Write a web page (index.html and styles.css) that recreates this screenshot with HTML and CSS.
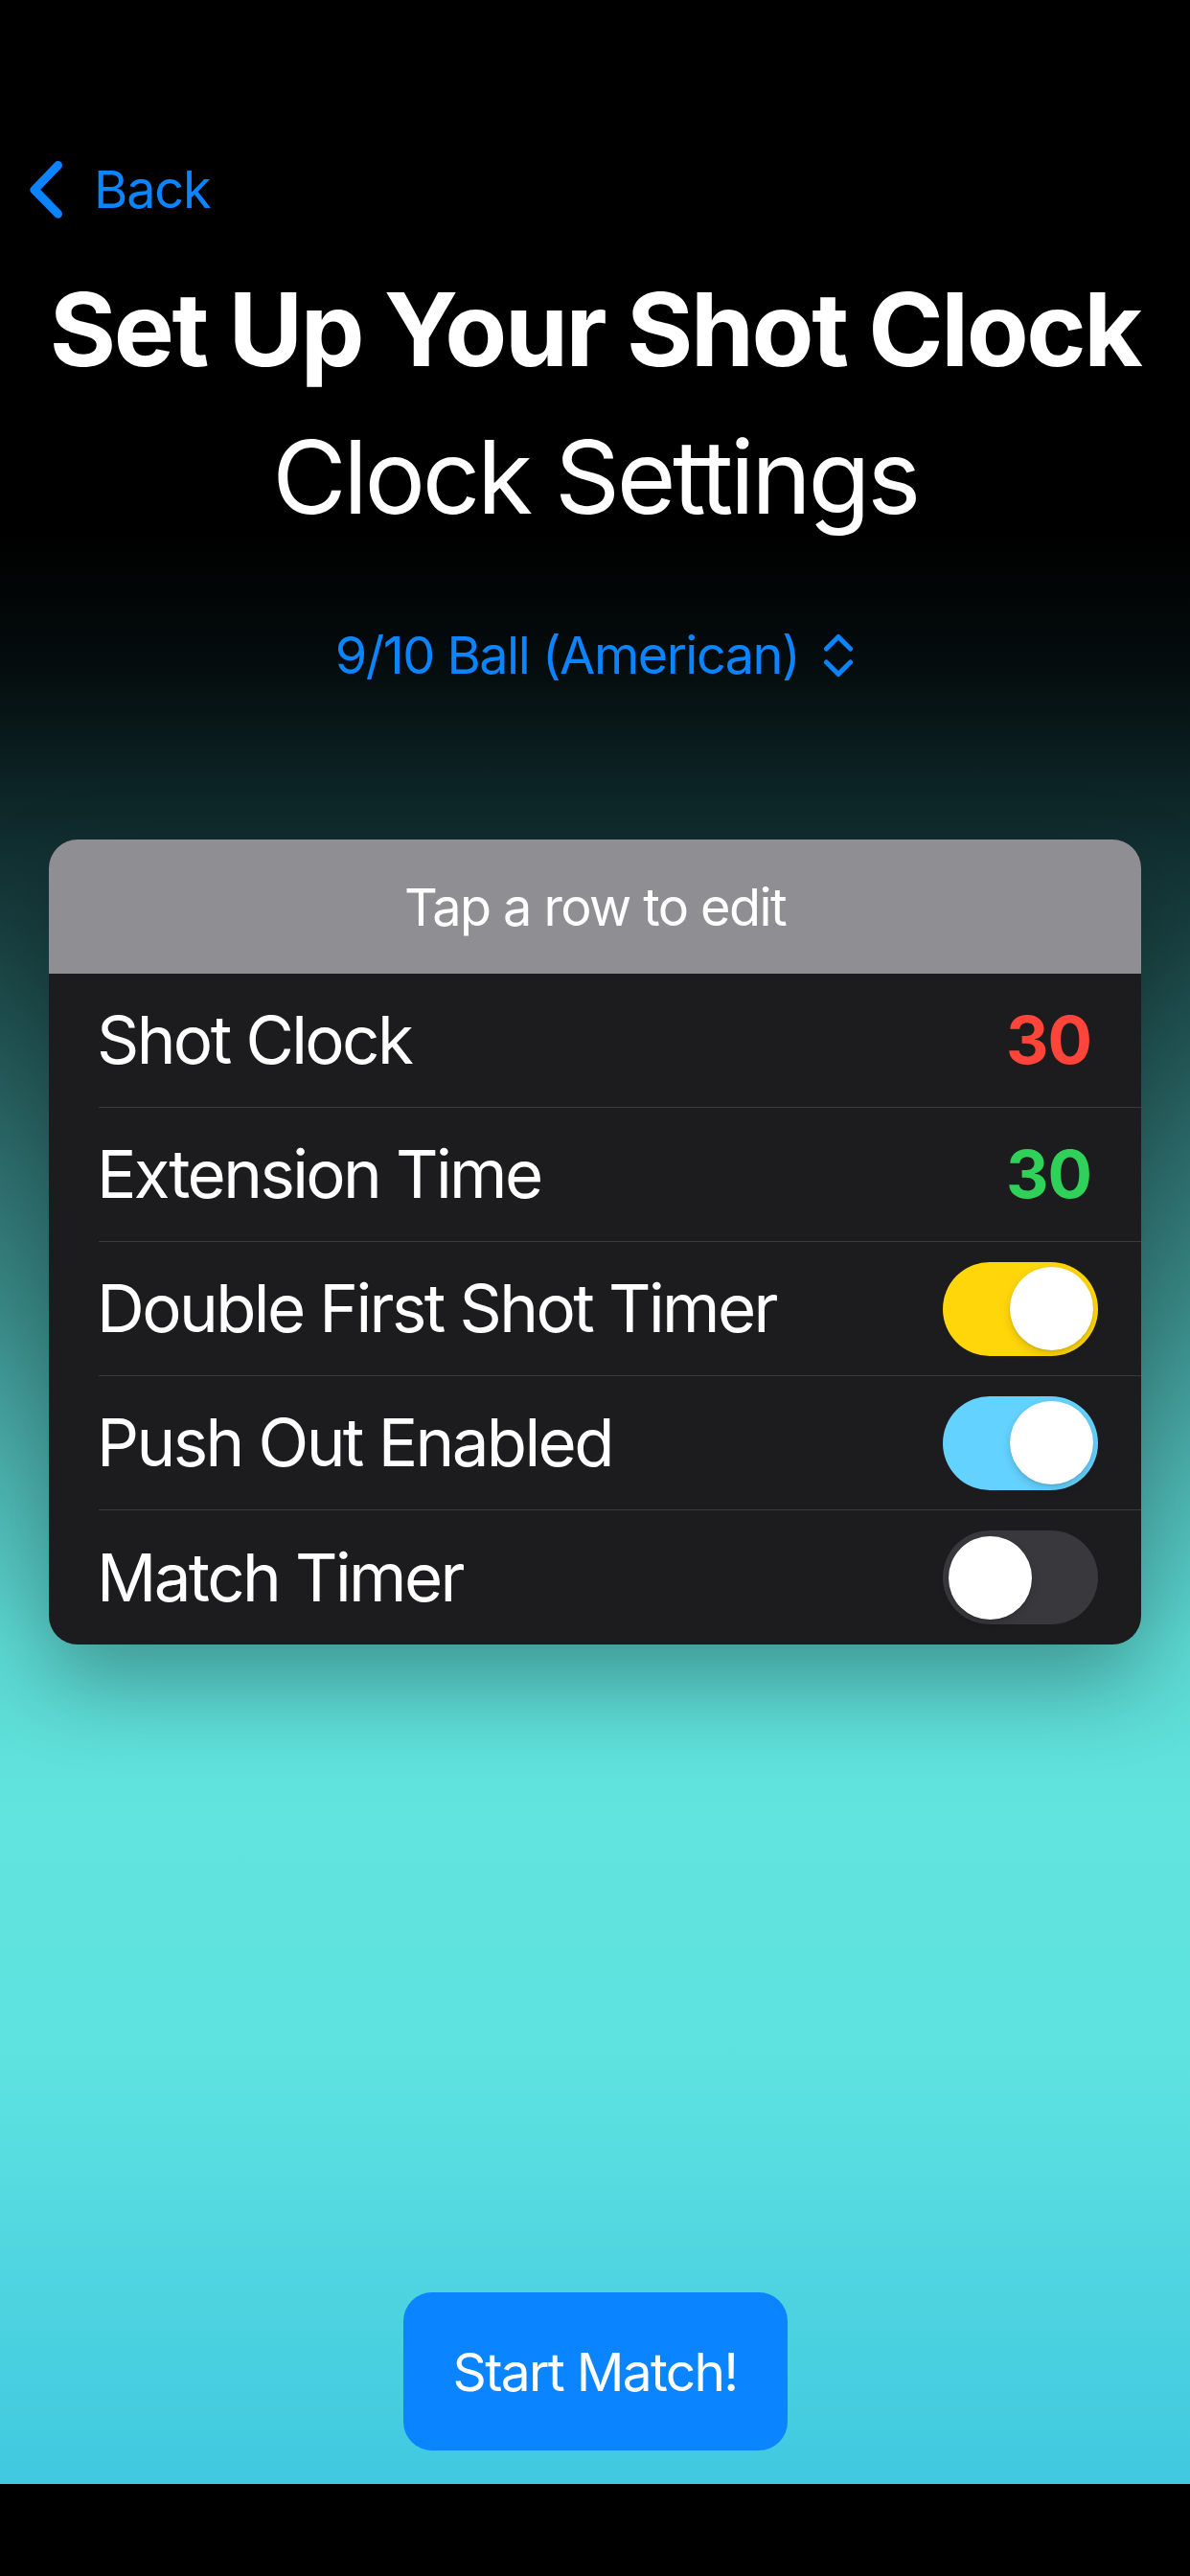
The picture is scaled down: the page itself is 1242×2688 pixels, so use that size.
FILE: index.html
```html
<!DOCTYPE html>
<html lang="en">
<head>
<meta charset="utf-8">
<title>Set Up Your Shot Clock</title>
<link rel="stylesheet" href="styles.css">
</head>
<body>
<div class="screen">
  <nav class="nav">
    <a class="back" href="#">
      <svg class="back-chevron" width="40" height="64" viewBox="0 0 40 64" aria-hidden="true">
        <path d="M32.5 6.5 L8 32 L32.5 57.2" fill="none" stroke="#0a84ff" stroke-width="9" stroke-linecap="round" stroke-linejoin="round"/>
      </svg>
      <span class="back-label">Back</span>
    </a>
  </nav>

  <header class="heading">
    <h1 class="title">Set Up Your Shot Clock</h1>
    <h2 class="subtitle">Clock Settings</h2>
  </header>

  <div class="picker">
    <span class="picker-label">9/10 Ball (American)</span>
    <svg class="picker-chevrons" width="34" height="46" viewBox="0 0 34 46" aria-hidden="true">
      <path d="M4.5 16 L17 3.5 L29.5 16" fill="none" stroke="#0a84ff" stroke-width="5" stroke-linecap="round" stroke-linejoin="round"/>
      <path d="M4.5 30 L17 42.5 L29.5 30" fill="none" stroke="#0a84ff" stroke-width="5" stroke-linecap="round" stroke-linejoin="round"/>
    </svg>
  </div>

  <section class="card">
    <div class="card-header">Tap a row to edit</div>
    <div class="row">
      <div class="row-inner">
        <span class="row-label">Shot Clock</span>
        <span class="row-value value-red">30</span>
      </div>
    </div>
    <div class="row">
      <div class="row-inner">
        <span class="row-label">Extension Time</span>
        <span class="row-value value-green">30</span>
      </div>
    </div>
    <div class="row">
      <div class="row-inner row-toggle">
        <span class="row-label">Double First Shot Timer</span>
        <span class="toggle toggle-yellow"><span class="knob"></span></span>
      </div>
    </div>
    <div class="row">
      <div class="row-inner row-toggle">
        <span class="row-label">Push Out Enabled</span>
        <span class="toggle toggle-cyan"><span class="knob"></span></span>
      </div>
    </div>
    <div class="row row-last">
      <div class="row-inner row-toggle">
        <span class="row-label">Match Timer</span>
        <span class="toggle toggle-off"><span class="knob"></span></span>
      </div>
    </div>
  </section>

  <div class="actions">
    <button class="start-button" type="button">Start Match!</button>
  </div>
</div>
<div class="home-bar"></div>
</body>
</html>
```

FILE: styles.css
```css
* {
  box-sizing: border-box;
}

html, body {
  margin: 0;
  padding: 0;
  background: #000;
}

body {
  width: 1242px;
  height: 2688px;
  overflow: hidden;
  font-family: Inter, "Noto Sans", "Liberation Sans", sans-serif;
  color: #fff;
}

.screen {
  height: 2592px;
  display: flex;
  flex-direction: column;
  background: linear-gradient(
    to bottom,
    #000000 0%,
    #000000 21.6%,
    #050d0e 27%,
    #0f2a2c 33%,
    #1d4a4a 39.7%,
    #3a8c8a 52.9%,
    #4cb3af 59.5%,
    #5cd8d2 66.2%,
    #61e4de 72.8%,
    #5ee2e0 83%,
    #40c8e0 100%
  );
}

.nav {
  padding-top: 140px;
  height: 255px;
  padding-left: 28px;
}

.back {
  display: flex;
  align-items: center;
  height: 115px;
  gap: 30px;
  text-decoration: none;
  color: #0a84ff;
}

.back-chevron {
  display: block;
  flex: none;
}

.back-label {
  font-size: 54px;
  line-height: 1;
  font-weight: 400;
  letter-spacing: -1.2px;
}

.heading {
  margin-top: 12px;
  text-align: center;
}

.title,
.subtitle {
  margin: 0;
  font-size: 106px;
  line-height: 154px;
}

.title {
  font-weight: 700;
  letter-spacing: -2.4px;
}

.subtitle {
  font-weight: 400;
  letter-spacing: -3.4px;
}

.picker {
  margin-top: 77px;
  height: 64px;
  display: flex;
  justify-content: center;
  align-items: center;
  gap: 24px;
  color: #0a84ff;
}

.picker-label {
  font-size: 54px;
  line-height: 64px;
  letter-spacing: -1.5px;
}

.picker-chevrons {
  display: block;
  flex: none;
}

.card {
  margin: 160px 51px 0;
  background: #1c1c1e;
  border-radius: 30px;
  overflow: hidden;
  box-shadow: 0 40px 90px rgba(0, 0, 0, 0.3);
}

.card-header {
  height: 140px;
  padding-top: 2px;
  line-height: 138px;
  text-align: center;
  font-size: 54px;
  letter-spacing: -1.6px;
  background: #8e8e93;
  color: #fff;
}

.row {
  padding-left: 52px;
  height: 140px;
}

.row-inner {
  height: 140px;
  display: flex;
  align-items: center;
  justify-content: space-between;
  padding-right: 52px;
  border-bottom: 1px solid #3a3a3c;
}

.row-last .row-inner {
  border-bottom: none;
}

.row-toggle {
  padding-right: 45px;
}

.row-label {
  margin-left: -2px;
  font-size: 69px;
  line-height: 1;
  letter-spacing: -2.6px;
}

.row-value {
  font-size: 69px;
  line-height: 1;
  font-weight: 700;
  letter-spacing: -1px;
}

.value-red {
  color: #ff453a;
}

.value-green {
  color: #30d158;
}

.toggle {
  width: 162px;
  height: 98px;
  border-radius: 49px;
  padding: 5.5px;
  display: flex;
  flex: none;
}

.toggle-yellow {
  background: #ffd60a;
  justify-content: flex-end;
}

.toggle-cyan {
  background: #64d2ff;
  justify-content: flex-end;
}

.toggle-off {
  background: #39393d;
  justify-content: flex-start;
}

.knob {
  width: 87px;
  height: 87px;
  border-radius: 50%;
  background: #fff;
  box-shadow: 0 4px 10px rgba(0, 0, 0, 0.15), 0 1px 2px rgba(0, 0, 0, 0.1);
}

.actions {
  margin-top: auto;
  margin-bottom: 35px;
  display: flex;
  justify-content: center;
}

.start-button {
  width: 401px;
  height: 165px;
  border: none;
  border-radius: 30px;
  background: #0a84ff;
  color: #fff;
  font-family: Inter, "Noto Sans", "Liberation Sans", sans-serif;
  font-size: 55px;
  letter-spacing: -1.7px;
  padding: 0;
}

.home-bar {
  height: 96px;
  background: #000;
}
```
